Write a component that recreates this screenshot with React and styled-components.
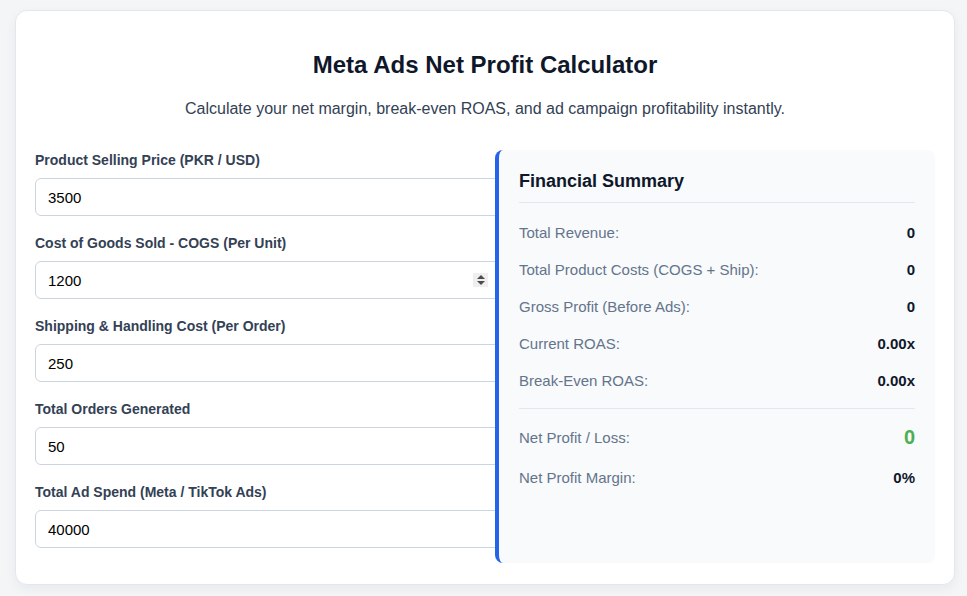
import React from "react";
import styled, { createGlobalStyle } from "styled-components";

const Global = createGlobalStyle`
  * { box-sizing: content-box; }
  html, body { margin: 0; padding: 0; background: #f4f5f7; }
  body {
    font-family: "Liberation Sans", Arial, Helvetica, sans-serif;
    padding: 10px 12px 10px 15px;
  }
`;

const Card = styled.div`
  width: 900px;
  background: #ffffff;
  border: 1px solid #e2e8f0;
  border-radius: 12px;
  padding: 19px 19px 21px 19px;
  box-shadow: 0 4px 12px rgba(15, 23, 42, 0.05);
`;

const Header = styled.div`
  text-align: center;
  padding-top: 21px;
  margin-bottom: 31px;
`;

const Title = styled.h1`
  margin: 0 0 20px;
  font-size: 24px;
  line-height: 28px;
  font-weight: 700;
  color: #0f172a;
`;

const Subtitle = styled.p`
  margin: 0;
  font-size: 16px;
  line-height: 20px;
  color: #334155;
`;

const Grid = styled.div`
  display: grid;
  grid-template-columns: 440px 440px;
  column-gap: 20px;
  align-items: stretch;
`;

const Form = styled.div`
  display: flex;
  flex-direction: column;
  gap: 17px;
  padding-bottom: 15px;
`;

const Field = styled.div`
  position: relative;
`;

const Label = styled.label`
  display: block;
  font-size: 14px;
  line-height: 20px;
  font-weight: 700;
  color: #334155;
  margin-bottom: 8px;
`;

const Input = styled.input`
  display: block;
  width: 100%;
  height: 36px;
  padding: 0 12px;
  border: 1px solid #cbd5e1;
  border-radius: 6px;
  font-family: "Liberation Sans", Arial, sans-serif;
  font-size: 15px;
  color: #000;
  background: #fff;
  outline: none;
`;

const Spinner = styled.span`
  position: absolute;
  right: -13px;
  top: 40px;
  width: 15px;
  height: 14px;
  background: #efefef;
  display: flex;
  flex-direction: column;
  align-items: center;
  justify-content: center;
  gap: 2px;
`;

const Tri = styled.span`
  width: 0;
  height: 0;
  border-left: 4px solid transparent;
  border-right: 4px solid transparent;
  ${(p) => (p.$up ? "border-bottom: 4px solid #4b4b4b;" : "border-top: 4px solid #4b4b4b;")}
`;

const Panel = styled.div`
  position: relative;
  z-index: 1;
  background: #f8fafc;
  border-left: 4px solid #2563eb;
  border-radius: 8px;
  padding: 20px 20px 20px 20px;
`;

const PanelTitle = styled.h3`
  margin: 0 0 11px;
  font-size: 18px;
  line-height: 22px;
  font-weight: 700;
  color: #0f172a;
  padding-bottom: 10px;
  border-bottom: 1px solid #e2e8f0;
`;

const Row = styled.div`
  display: flex;
  justify-content: space-between;
  align-items: center;
  padding: ${(p) => (p.$top ? "16px 0 10px" : "10px 0")};
  font-size: 15px;
  line-height: 17px;
  ${(p) => (p.$divider ? "margin-top: 9px; border-top: 1px solid #e2e8f0;" : "")}
`;

const RowLabel = styled.span`
  color: #64748b;
`;

const RowValue = styled.span`
  font-weight: 700;
  color: ${(p) => p.$color || "#0f172a"};
  font-size: ${(p) => p.$size || "15px"};
  line-height: ${(p) => (p.$size ? "24px" : "17px")};
`;

const fields = [
  { label: "Product Selling Price (PKR / USD)", value: "3500" },
  { label: "Cost of Goods Sold - COGS (Per Unit)", value: "1200", spinner: true },
  { label: "Shipping & Handling Cost (Per Order)", value: "250" },
  { label: "Total Orders Generated", value: "50" },
  { label: "Total Ad Spend (Meta / TikTok Ads)", value: "40000" },
];

const rows = [
  ["Total Revenue:", "0"],
  ["Total Product Costs (COGS + Ship):", "0"],
  ["Gross Profit (Before Ads):", "0"],
  ["Current ROAS:", "0.00x"],
  ["Break-Even ROAS:", "0.00x"],
];

export default function App() {
  return (
    <>
      <Global />
      <Card>
        <Header>
          <Title>Meta Ads Net Profit Calculator</Title>
          <Subtitle>
            Calculate your net margin, break-even ROAS, and ad campaign profitability instantly.
          </Subtitle>
        </Header>
        <Grid>
          <Form>
            {fields.map((f) => (
              <Field key={f.label}>
                <Label>{f.label}</Label>
                <Input type="text" defaultValue={f.value} readOnly />
                {f.spinner && (
                  <Spinner>
                    <Tri $up />
                    <Tri />
                  </Spinner>
                )}
              </Field>
            ))}
          </Form>
          <Panel>
            <PanelTitle>Financial Summary</PanelTitle>
            {rows.map(([l, v]) => (
              <Row key={l}>
                <RowLabel>{l}</RowLabel>
                <RowValue>{v}</RowValue>
              </Row>
            ))}
            <Row $divider $top>
              <RowLabel>Net Profit / Loss:</RowLabel>
              <RowValue $color="#4caf50" $size="20px">0</RowValue>
            </Row>
            <Row>
              <RowLabel>Net Profit Margin:</RowLabel>
              <RowValue>0%</RowValue>
            </Row>
          </Panel>
        </Grid>
      </Card>
    </>
  );
}
